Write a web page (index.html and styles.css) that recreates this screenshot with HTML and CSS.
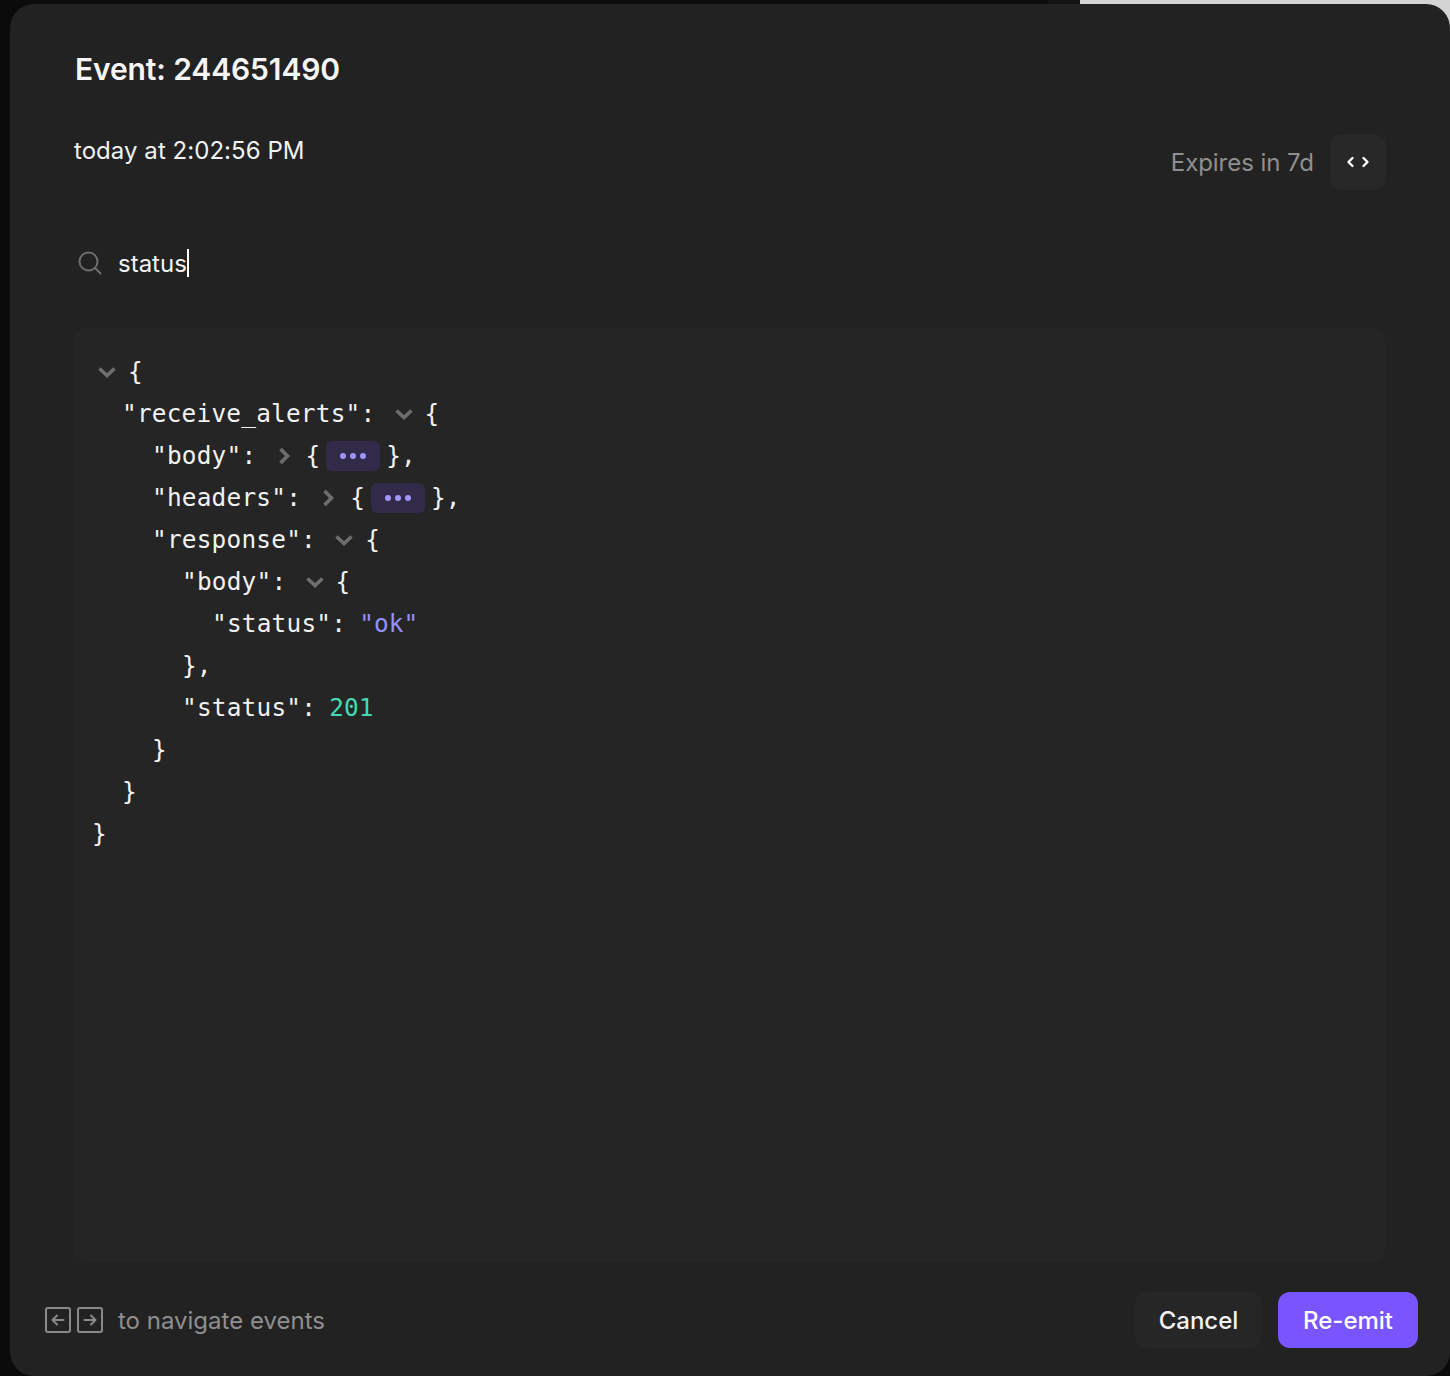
FILE: index.html
```html
<!DOCTYPE html>
<html lang="en">
<head>
<meta charset="utf-8">
<title>Event 244651490</title>
<link rel="stylesheet" href="styles.css">
</head>
<body>
<main class="modal">
  <h1 class="title">Event: 244651490</h1>
  <div class="meta">
    <div class="time">today at 2:02:56 PM</div>
    <div class="meta-right">
      <span class="expires">Expires in 7d</span>
      <button class="code-btn" type="button" aria-label="View code">
        <svg width="24" height="14" viewBox="0 0 24 14" fill="none" stroke="#fff" stroke-width="2.400" stroke-linecap="round" stroke-linejoin="round"><path d="M6.500 3 2.500 7l4 4"/><path d="M17.500 3l4 4-4 4"/></svg>
      </button>
    </div>
  </div>
  <div class="search">
    <svg class="search-icon" width="24" height="24" viewBox="0 0 24 24" fill="none" stroke="#6e6e6e" stroke-width="2" stroke-linecap="round"><circle cx="10.500" cy="10.500" r="9"/><path d="m17 17 5.500 5.500"/></svg>
    <span class="query">status</span><span class="caret"></span>
  </div>
  <section class="tree">
    <div class="row"><span class="toggle"><svg class="chev" width="20" height="12" viewBox="0 0 20 12"><path d="M2.500 2.500l7.500 7 7.500-7"/></svg></span>{</div>
    <div class="row l1"><span class="key">"receive_alerts": </span><span class="toggle"><svg class="chev" width="20" height="12" viewBox="0 0 20 12"><path d="M2.500 2.500l7.500 7 7.500-7"/></svg></span>{</div>
    <div class="row l2"><span class="key">"body": </span><span class="toggle"><svg class="chev" width="14" height="20" viewBox="0 0 14 20"><path d="M2.500 3l7 7-7 7"/></svg></span>{<span class="more"><i></i><i></i><i></i></span>},</div>
    <div class="row l2"><span class="key">"headers": </span><span class="toggle"><svg class="chev" width="14" height="20" viewBox="0 0 14 20"><path d="M2.500 3l7 7-7 7"/></svg></span>{<span class="more"><i></i><i></i><i></i></span>},</div>
    <div class="row l2"><span class="key">"response": </span><span class="toggle"><svg class="chev" width="20" height="12" viewBox="0 0 20 12"><path d="M2.500 2.500l7.500 7 7.500-7"/></svg></span>{</div>
    <div class="row l3"><span class="key">"body": </span><span class="toggle"><svg class="chev" width="20" height="12" viewBox="0 0 20 12"><path d="M2.500 2.500l7.500 7 7.500-7"/></svg></span>{</div>
    <div class="row l4"><span class="key">"status": </span><span class="str">"ok"</span></div>
    <div class="row l3">},</div>
    <div class="row l3"><span class="key">"status": </span><span class="num">201</span></div>
    <div class="row l2">}</div>
    <div class="row l1">}</div>
    <div class="row">}</div>
  </section>
  <footer class="footer">
    <div class="hint">
      <span class="key-cap"><svg width="26" height="26" viewBox="0 0 26 26" fill="none" stroke="#8a8a8a" stroke-width="2" stroke-linecap="round" stroke-linejoin="round"><rect x="1" y="1" width="24" height="24" rx="2"/><path d="M18.500 13h-11M12 8.500 7.500 13l4.500 4.500"/></svg></span>
      <span class="key-cap"><svg width="26" height="26" viewBox="0 0 26 26" fill="none" stroke="#8a8a8a" stroke-width="2" stroke-linecap="round" stroke-linejoin="round"><rect x="1" y="1" width="24" height="24" rx="2"/><path d="M7.500 13h11M14 8.500l4.500 4.500-4.500 4.500"/></svg></span>
      <span class="hint-text">to navigate events</span>
    </div>
    <div class="actions">
      <button class="btn cancel" type="button">Cancel</button>
      <button class="btn primary" type="button">Re-emit</button>
    </div>
  </footer>
</main>
</body>
</html>
```
FILE: styles.css
```css
* { box-sizing: border-box; }
html, body { margin: 0; height: 1376px; overflow: hidden; }
body {
  background:
    linear-gradient(90deg, #0b0b0b 0 1048px, #141414 1048px 1080px, #d4d4d4 1080px) top left / 100% 30px no-repeat,
    #0b0b0b;
  font-family: Inter, "Liberation Sans", sans-serif;
  color: #f2f2f2;
  padding: 4px 0 0 10px;
}
.modal {
  width: 1440px;
  height: 1372px;
  background: #222222;
  border-radius: 24px;
  display: flex;
  flex-direction: column;
  padding: 45px 32px 28px 35px;
}
.title {
  margin: 0 0 0 30px;
  font-size: 30px;
  line-height: 40px;
  font-weight: 600;
  letter-spacing: -0.12px;
  color: #f5f5f5;
}
.meta {
  margin: 45px 32px 0 29px;
  display: flex;
  justify-content: space-between;
  align-items: flex-start;
}
.time { font-size: 24px; line-height: 34px; letter-spacing: 0.05px; }
.meta-right { display: flex; align-items: center; gap: 16px; }
.expires { font-size: 24px; color: #8f8f8f; letter-spacing: -0.05px; }
.code-btn {
  width: 56px;
  height: 56px;
  border: 0;
  border-radius: 12px;
  background: #282828;
  display: flex;
  align-items: center;
  justify-content: center;
  padding: 0;
}
.search {
  margin: 53px 0 0 33px;
  height: 40px;
  display: flex;
  align-items: center;
}
.search-icon { margin-right: 16px; }
.query { font-size: 24px; color: #f2f2f2; }
.caret { width: 2px; height: 28px; background: #fff; }
.tree {
  margin: 45px 33px 0 29px;
  flex: 1;
  background: #252525;
  border-radius: 12px;
  padding: 23px 18px;
  font-family: "DejaVu Sans Mono", "Liberation Mono", monospace;
  font-size: 24.4px;
  color: #f2f2f2;
}
.row { height: 42px; line-height: 42px; white-space: pre; display: flex; align-items: center; }
.l1 { padding-left: 30px; }
.l2 { padding-left: 60px; }
.l3 { padding-left: 90px; }
.l4 { padding-left: 120px; }
.key { letter-spacing: 0.22px; margin-right: -1.7px; }
.toggle {
  width: 36px;
  height: 42px;
  display: inline-flex;
  align-items: center;
  justify-content: center;
  padding-right: 6px;
  flex: none;
}
.chev { fill: none; stroke: #6e6e6e; stroke-width: 3.600; }
.more {
  width: 54px;
  height: 30px;
  margin: 0 6px;
  border-radius: 6px;
  background: #312b49;
  display: inline-flex;
  align-items: center;
  justify-content: center;
  gap: 4px;
}
.more i { width: 6px; height: 6px; border-radius: 50%; background: #a094ff; }
.str { color: #9590ff; }
.num { color: #44d9b0; }
.footer {
  margin-top: 30px;
  height: 56px;
  display: flex;
  justify-content: space-between;
  align-items: center;
}
.hint { display: flex; align-items: center; gap: 6px; }
.key-cap { display: flex; }
.hint-text { font-size: 24px; color: #8f8f8f; margin-left: 9px; }
.actions { display: flex; gap: 16px; }
.btn {
  height: 56px;
  border: 0;
  border-radius: 12px;
  font-family: inherit;
  font-size: 24px;
  font-weight: 500;
  padding: 0;
}
.cancel { width: 127px; background: #262626; color: #f2f2f2; }
.primary { width: 140px; background: #7855ff; color: #fff; }
```
